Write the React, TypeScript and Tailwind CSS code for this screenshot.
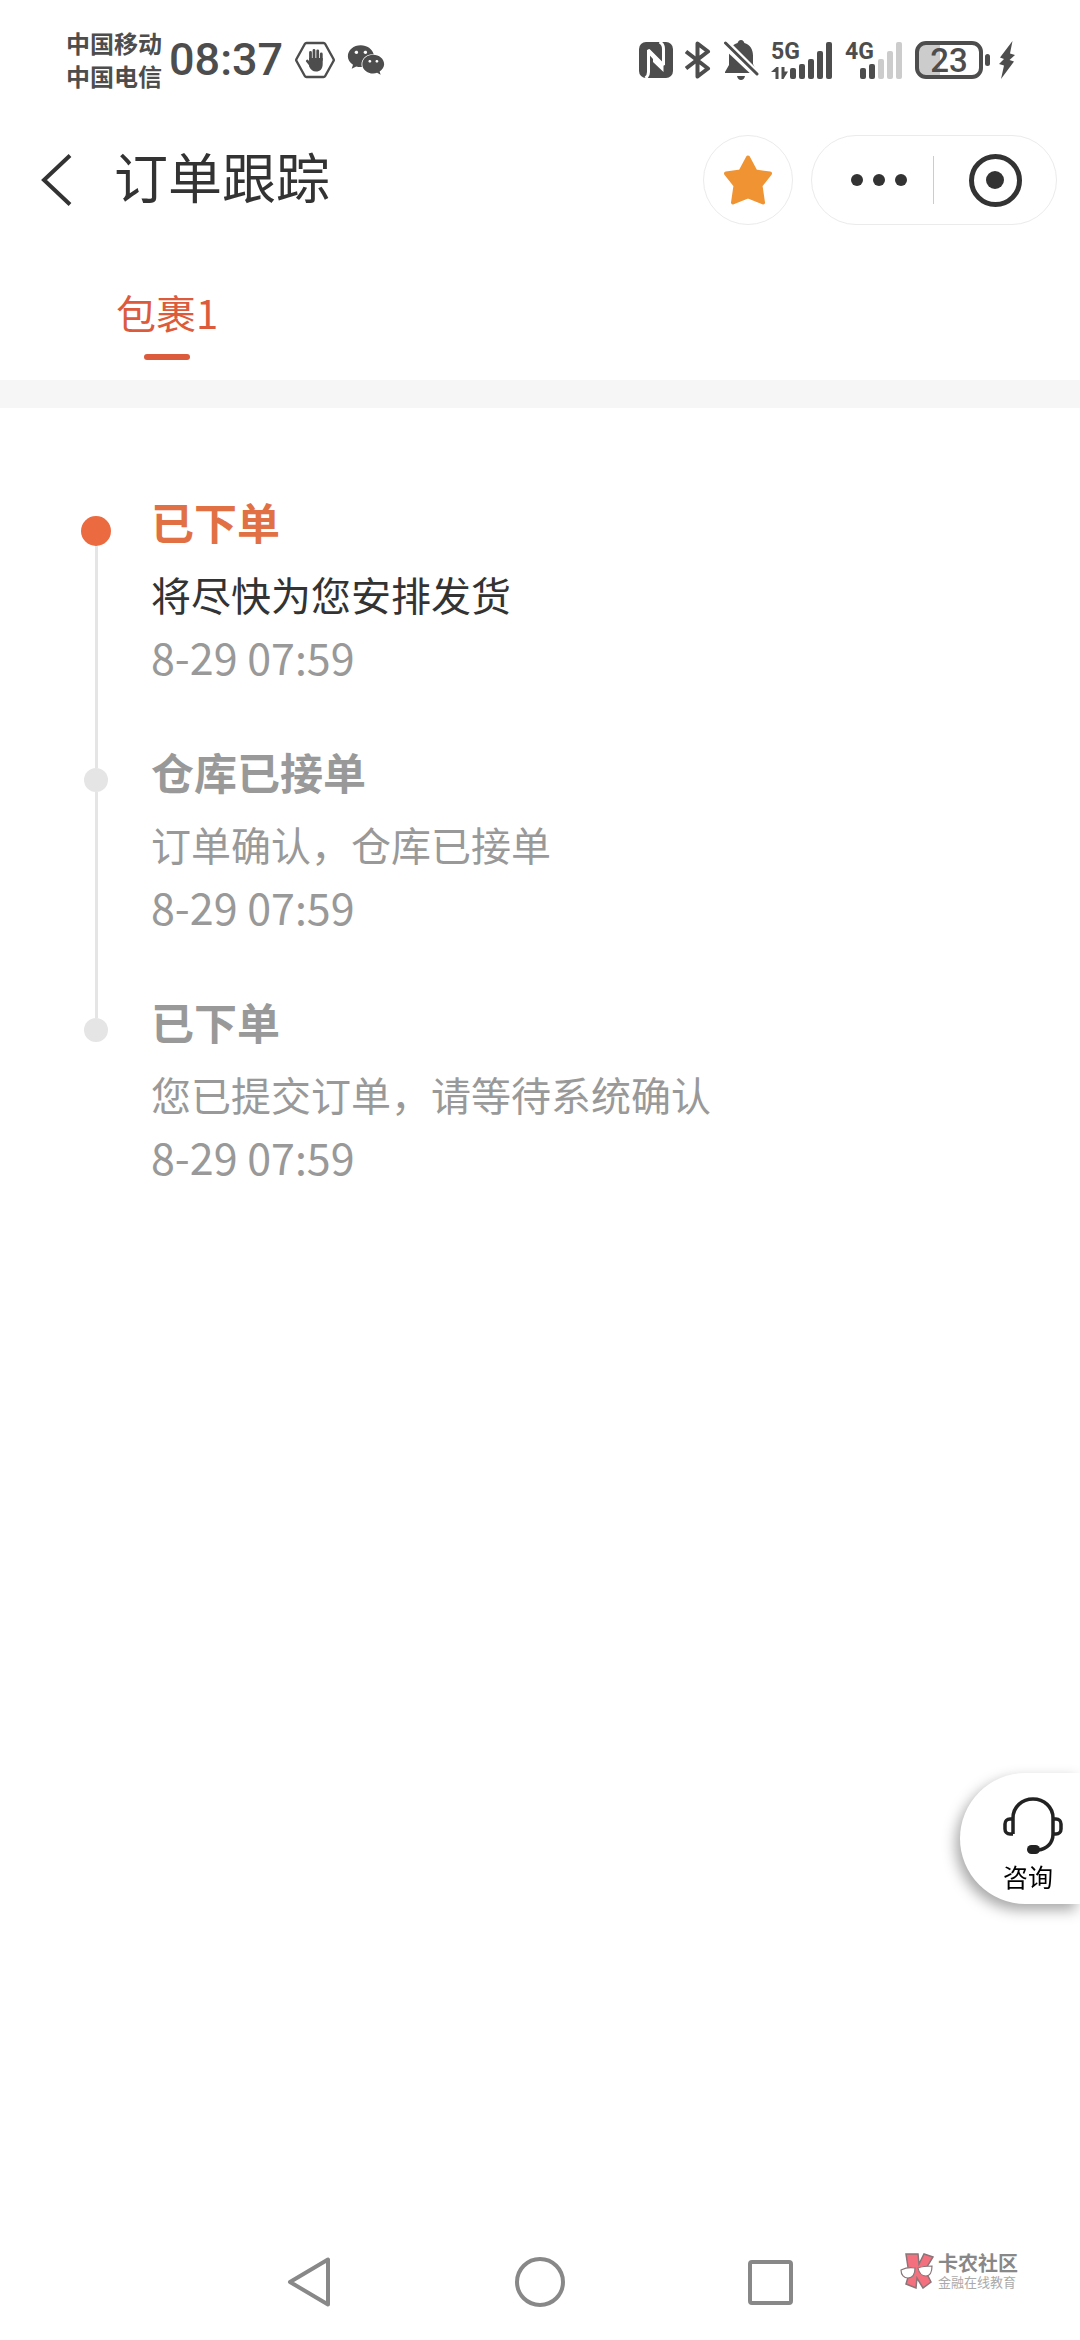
import { FC } from "react";
import { FaWeixin } from "react-icons/fa";

interface TrackStep {
  title: string;
  detail: string;
  time: string;
}

const steps: TrackStep[] = [
  { title: "已下单", detail: "将尽快为您安排发货", time: "8-29 07:59" },
  { title: "仓库已接单", detail: "订单确认，仓库已接单", time: "8-29 07:59" },
  { title: "已下单", detail: "您已提交订单，请等待系统确认", time: "8-29 07:59" },
];

const HandIcon: FC = () => (
  <svg width="40" height="38" viewBox="0 0 40 38" fill="none" stroke="currentColor">
    <path d="M11.5 2h17a2 2 0 0 1 1.7 1l8.3 15a2 2 0 0 1 0 2l-8.3 15a2 2 0 0 1-1.7 1h-17a2 2 0 0 1-1.7-1L1.5 20a2 2 0 0 1 0-2L9.800 3a2 2 0 0 1 1.700-1z" strokeWidth="2.400" />
    <path d="M15.500 19V11.500M19 18V9.500M22.700 18V9.800M26.300 19V13" strokeWidth="2.800" strokeLinecap="round" />
    <path d="M12.300 20l3.200 4" strokeWidth="2.800" strokeLinecap="round" />
    <path d="M14.100 17h13.600v6c0 5-2.700 7.500-6.700 7.500-3.400 0-5-1.500-6.900-5z" fill="currentColor" stroke="none" />
  </svg>
);

const NfcIcon: FC = () => (
  <svg width="34" height="36" viewBox="0 0 34 36">
    <rect width="34" height="36" rx="7" fill="currentColor" />
    <path d="M6.500 36c2.500-1.500 3-3.500 3-6V8L24.500 23V7c0-3-1-5.500-4-7" fill="none" stroke="#fff" strokeWidth="3" strokeLinejoin="bevel" />
    <path d="M9.500 12L14 17v3L24.500 30v-7L9.500 7z" fill="#fff" />
  </svg>
);

const BluetoothIcon: FC = () => (
  <svg width="26" height="38" viewBox="0 0 26 38" fill="none" stroke="currentColor" strokeWidth="4" strokeLinejoin="round">
    <path d="M1 10.500L23 27.500L12.500 35.500V2.500L23 10.500L1 27.500" />
  </svg>
);

const BellOffIcon: FC = () => (
  <svg width="36" height="40" viewBox="0 0 36 40">
    <path d="M18 0c2 0 3 1.500 3.400 3C27 4.500 30 9.500 30 15.500V24l4 8v1H2v-1l4-7v-9.500C6 9 9 4.500 14.600 3 15 1.500 16 0 18 0z" fill="currentColor" />
    <path d="M14 36h8c-.5 2.600-2 4-4 4s-3.500-1.400-4-4z" fill="currentColor" />
    <path d="M4-1L38 33L32 38L-2 6z" fill="#fff" />
    <path d="M2.500 3L34 34" stroke="currentColor" strokeWidth="3" strokeLinecap="round" />
  </svg>
);

interface SignalProps {
  label: string;
  active: number;
  arrows?: boolean;
}

const bars = [
  { x: 19, y: 26 },
  { x: 28, y: 22 },
  { x: 37, y: 17 },
  { x: 46, y: 9 },
  { x: 55, y: 0 },
];

const SignalIcon: FC<SignalProps> = ({ label, active, arrows }) => (
  <svg width="62" height="37" viewBox="0 0 62 37" className="overflow-visible">
    {bars.map((bar, i) => (
      <rect key={bar.x} x={bar.x} y={bar.y} width="6" height={37 - bar.y} rx="2" fill={i < active ? "#4d4d4d" : "#cccccc"} />
    ))}
    {arrows && <path d="M4.500 37V30H0L5.500 25h2v12zM10.500 25h3v4.500H17L12.500 37h-2z" fill="#4d4d4d" />}
    <text x={arrows ? 0 : 4} y="17" fill="#4d4d4d" className="font-['Roboto',sans-serif] text-[23px] font-bold">
      {label}
    </text>
  </svg>
);

const StatusBar: FC = () => (
  <div className="flex h-[120px] items-center justify-between pr-16 pl-[66px] text-[#4d4d4d]">
    <div className="flex items-center">
      <div className="pb-[3px] text-[24px] leading-[33px] font-bold">
        <div>中国移动</div>
        <div>中国电信</div>
      </div>
      <span className="ml-[7px] font-['Roboto',sans-serif] text-[45px] leading-[60px] font-medium">08:37</span>
      <div className="ml-3 flex items-center gap-3">
        <HandIcon />
        <FaWeixin size={38} />
      </div>
    </div>
    <div className="flex items-center gap-3">
      <NfcIcon />
      <BluetoothIcon />
      <BellOffIcon />
      <SignalIcon label="5G" active={5} arrows />
      <div className="-ml-1">
        <SignalIcon label="4G" active={2} />
      </div>
      <div className="flex items-center gap-[2px]">
        <div className="flex h-[38px] w-[68px] items-center justify-center rounded-[11px] border-4 border-[#4d4d4d] bg-linear-to-r from-[#cccccc] from-35% to-white to-35% font-['Roboto',sans-serif] text-[33px] leading-[33px] font-medium">
          23
        </div>
        <div className="h-3 w-[5px] rounded-full bg-[#4d4d4d]"></div>
        <svg width="18" height="38" viewBox="0 0 16 38" className="ml-[6px]">
          <path d="M13.500 0L1 16.500l4 1.500L0 23l5 1.500L2 38L15 20.500l-4.500-1.500L16 14l-5-1.500z" fill="currentColor" />
        </svg>
      </div>
    </div>
  </div>
);

const Header: FC = () => (
  <header className="flex h-[120px] items-center pr-[23px] pl-10">
    <button aria-label="返回" className="flex h-[60px] w-8 items-center">
      <svg width="32" height="52" viewBox="0 0 32 52" fill="none" stroke="#333333" strokeWidth="4">
        <path d="M30 1.500L4 26L30 50.500" />
      </svg>
    </button>
    <h1 className="ml-[42px] pb-2 text-[54px] leading-[72px] text-[#333333]">订单跟踪</h1>
    <div className="ml-auto flex items-center gap-[18px]">
      <button aria-label="收藏" className="flex size-[90px] items-center justify-center rounded-full border border-[#ebebeb]">
        <svg width="48" height="50" viewBox="0 0 48 50">
          <path
            d="M24 2.500L31.500 16.500L46 18.500L36.500 30.500L39 47.500L24 41.500L9 47.500L11.500 30.500L2 18.500L16.500 16.500z"
            fill="#f09433"
            stroke="#f09433"
            strokeWidth="4"
            strokeLinejoin="round"
          />
        </svg>
      </button>
      <div className="flex h-[90px] w-[246px] items-center rounded-full border border-[#ebebeb]">
        <button aria-label="更多" className="flex h-full flex-1 items-center justify-end gap-[10px] pr-[26px]">
          <span className="size-3 rounded-full bg-[#333333]"></span>
          <span className="size-3 rounded-full bg-[#333333]"></span>
          <span className="size-3 rounded-full bg-[#333333]"></span>
        </button>
        <div className="h-12 w-px bg-[#cccccc]"></div>
        <button aria-label="关闭" className="flex h-full w-[122px] items-center justify-center">
          <span className="flex size-[53px] items-center justify-center rounded-full border-[5px] border-[#333333]">
            <span className="size-[18px] rounded-full bg-[#333333]"></span>
          </span>
        </button>
      </div>
    </div>
  </header>
);

const Timeline: FC = () => (
  <ol className="px-[81px] pt-[83px]">
    {steps.map((step, i) => {
      const first = i === 0;
      const last = i === steps.length - 1;
      return (
        <li key={i} className="flex gap-10">
          <div className="flex w-[30px] flex-col items-center">
            <div className={first ? "h-[25px] w-[3px]" : "h-[27px] w-[3px] bg-[#e5e5e5]"}></div>
            <div className={first ? "size-[30px] rounded-full bg-[#eb6a40]" : "size-6 rounded-full bg-[#e5e5e5]"}></div>
            {!last && <div className="w-[3px] flex-1 bg-[#e5e5e5]"></div>}
          </div>
          <div className={first ? "pb-[54px]" : "pb-[54px] text-[#999999]"}>
            <h2 className={first ? "text-[43px] leading-[60px] font-bold text-[#e27045]" : "text-[43px] leading-[60px] font-bold"}>
              {step.title}
            </h2>
            <p className={first ? "mt-3 text-[40px] leading-[62px] text-[#333333]" : "mt-3 text-[40px] leading-[62px]"}>
              {step.detail}
            </p>
            <time className="block text-[43px] leading-[62px] text-[#999999]">{step.time}</time>
          </div>
        </li>
      );
    })}
  </ol>
);

const ServiceButton: FC = () => (
  <button className="fixed right-0 bottom-[436px] flex h-[131px] w-[120px] flex-col items-start rounded-l-full bg-white pt-6 pl-[43px] text-black shadow-[-4px_6px_14px_rgba(0,0,0,0.35)]">
    <svg width="60" height="58" viewBox="0 0 60 58" fill="none" stroke="#222222" strokeWidth="3.500">
      <path d="M10 37V21C10 10 19 2 30 2s20 8 20 19v16c0 9-6 15-15 16" />
      <path d="M10 22H7c-3 0-5 2-5 5v5c0 3 2 5 5 5h3M50 22h3c3 0 5 2 5 5v5c0 3-2 5-5 5h-3" />
      <rect x="24" y="48" width="13" height="9" rx="4.500" fill="#222222" stroke="none" />
    </svg>
    <span className="text-[25px] leading-[42px]">咨询</span>
  </button>
);

const Watermark: FC = () => (
  <div className="absolute right-[62px] bottom-[50px] flex items-center gap-1">
    <svg width="34" height="36" viewBox="0 0 34 36" stroke="#8c7478">
      <path d="M6 1h12l1 10 5-10 9 3-8 13 6 12-8 6-6-10-1 10-10-4 3-10z" fill="#f5707e" strokeWidth="1.500" />
      <path d="M1 17c4-2 9-3 14-2 0 6-2 10-7 10-4 0-7-3-7-8zM18 15c5-2 9-2 14-2 0 6-2 10-6 10-5 0-7-3-8-8z" fill="#fff" strokeWidth="1.200" />
    </svg>
    <div className="text-[#888888]">
      <div className="text-[20px] leading-[22px] font-bold">卡农社区</div>
      <div className="text-[13px] leading-[16px] text-[#aaaaaa]">金融在线教育</div>
    </div>
  </div>
);

const NavBar: FC = () => (
  <nav className="relative flex h-[116px] items-center justify-center gap-[180px]">
    <button aria-label="后退" className="flex size-[50px] items-center justify-center">
      <svg width="50" height="50" viewBox="0 0 50 50" fill="none" stroke="#888888" strokeWidth="4" strokeLinejoin="round">
        <path d="M43 2.500V47.500L5 25z" />
      </svg>
    </button>
    <button aria-label="主页" className="size-[50px] rounded-full border-4 border-[#888888]"></button>
    <button aria-label="最近任务" className="flex size-[50px] items-center justify-center">
      <span className="size-[45px] rounded-[4px] border-4 border-[#888888]"></span>
    </button>
    <Watermark />
  </nav>
);

export default function App() {
  return (
    <div className="flex min-h-screen flex-col bg-white font-['Noto_Sans_CJK_SC',sans-serif]">
      <StatusBar />
      <Header />
      <div className="flex h-[140px] items-start pl-[116px]">
        <button className="flex flex-col items-center pt-[42px] text-[#dc5b3c]">
          <span className="text-[40px] leading-[60px]">包裹1</span>
          <span className="mt-3 h-[6px] w-[46px] rounded-full bg-[#dc5b3c]"></span>
        </button>
      </div>
      <div className="h-7 bg-[#f6f6f6]"></div>
      <main className="flex-1">
        <Timeline />
      </main>
      <ServiceButton />
      <NavBar />
    </div>
  );
}
